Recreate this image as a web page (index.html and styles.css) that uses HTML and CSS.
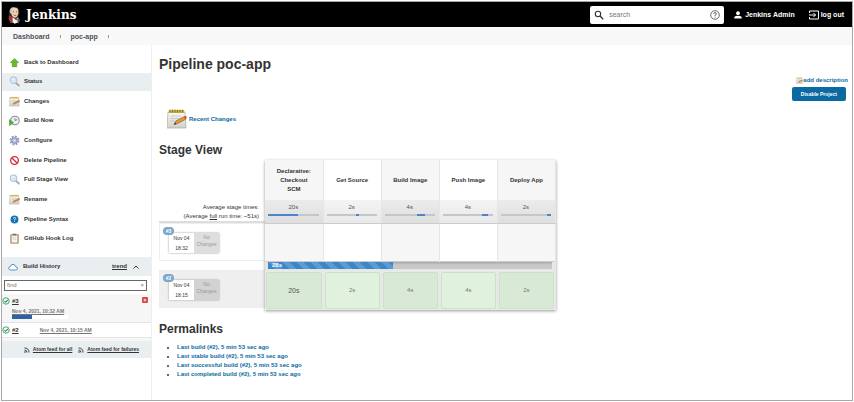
FILE: index.html
```html
<!DOCTYPE html>
<html lang="en">
<head>
<meta charset="utf-8">
<title>poc-app [Jenkins]</title>
<link rel="stylesheet" href="styles.css">
</head>
<body>
<svg class="defs" aria-hidden="true">
  <linearGradient id="paper" x1="0" y1="0" x2="0" y2="1"><stop offset="0" stop-color="#fafaf8"/><stop offset="1" stop-color="#cfcfcb"/></linearGradient>
  <symbol id="notepad" viewBox="0 0 20 20">
    <path d="M1 3h17l1 16H0z" fill="url(#paper)" stroke="#aaa9a3" stroke-width=".7"/>
    <path d="M2 1h15l.4 3H1.6z" fill="#c9b037"/>
    <path d="M3 .5v3M5.500.5v3M8 .5v3M10.500.5v3M13 .5v3M15.500.5v3" stroke="#77702f" stroke-width=".8"/>
    <path d="M3.500 7h11M3.500 9.500h9M3 12h5" stroke="#c3c3c0" stroke-width=".8"/>
    <path d="M7 15.500l2-3.500 8.500-4.500 1.500 2.500-8.500 4.500z" fill="#e59b3c" stroke="#8b5a28" stroke-width=".7"/>
    <path d="M7 15.500l1.200-2 1.200 1.400z" fill="#333"/>
    <path d="M17 7.700l1.500-.7q1.500.6 1.200 2l-1.300.9z" fill="#d94236"/>
  </symbol>
  <symbol id="note" viewBox="0 0 12 12">
    <path d="M1 2h9.500l.5 9H.5z" fill="url(#paper)" stroke="#b3b2ac" stroke-width=".6"/>
    <path d="M1 1h9.500v1.500H1z" fill="#d3b65a"/>
    <path d="M2.500 4.500h5M2.500 6h3" stroke="#c6c6c2" stroke-width=".6"/>
    <path d="M4 9l1.500-2L11 4.500l.8 1.500L6.500 8.700z" fill="#e3893a" stroke="#98602c" stroke-width=".4"/>
  </symbol>
  <symbol id="lens" viewBox="0 0 12 12">
    <path d="M7.500 7.500l3.300 3" stroke="#a2a2a0" stroke-width="1.800" stroke-linecap="round"/>
    <circle cx="5" cy="4.700" r="3.600" fill="#d6e8f8" stroke="#b0c0d0" stroke-width="1.100"/>
    <path d="M3 4.500q.5-1.800 2.300-1.800" stroke="#fff" fill="none"/>
  </symbol>
  <symbol id="check" viewBox="0 0 10 10">
    <circle cx="5" cy="5" r="4" fill="#fff" stroke="#2b9a59" stroke-width="1.100"/>
    <path d="M3 5l1.500 1.600L7.400 3.500" fill="none" stroke="#1d8348" stroke-width="1.300"/>
  </symbol>
  <symbol id="rss" viewBox="0 0 6 6">
    <path d="M.5 1Q5 1 5 5.500M.5 3q2.500 0 2.500 2.500" fill="none" stroke="#333" stroke-width=".9"/><circle cx="1" cy="5" r=".8" fill="#333"/>
  </symbol>
</svg>

<div class="frame">
  <header class="header">
    <a class="brand" href="#">
      <svg class="butler" viewBox="0 0 14 19" aria-hidden="true">
        <path d="M1 11Q0 5 3 2q4-3 8 0 2 3 1 7l-2 5H3z" fill="#2b2b2b"/>
        <path d="M3 5Q3 1.500 7 1.500T11.200 6q0 6-4 6.500Q3.500 12 3 5z" fill="#eed2b8"/>
        <path d="M2 7Q1 1.500 6.500.8 4 3 4 6L3 8z" fill="#c9c9c5"/>
        <path d="M5 6h1.500M8.500 6H10M6 9.500q1.500 1 3 0" stroke="#684637" stroke-width=".8" fill="none"/>
        <path d="M1 10l3 1 3 3-1 4H3Q0 15 1 10z" fill="#a83834"/>
        <path d="M5 12l3 2 3-2 1 5-5 2-2-2z" fill="#f3f3f3"/>
        <path d="M7.500 13.500l2.500-1 .4 3-2.500-.5z" fill="#c33b36"/>
        <path d="M11 12l2 3-2 4-1-3z" fill="#4c5c72"/>
      </svg>
      <span>Jenkins</span>
    </a>
    <label class="search">
      <svg class="i10" viewBox="0 0 10 10" aria-hidden="true"><circle cx="4" cy="4" r="2.700" fill="none" stroke="#333" stroke-width="1.100"/><path d="M6 6l3.200 3.200" stroke="#333" stroke-width="1.300"/></svg>
      <input type="text" placeholder="search" aria-label="search">
      <svg class="i10" viewBox="0 0 10 10" aria-hidden="true"><circle cx="5" cy="5" r="4.300" fill="none" stroke="#444" stroke-width=".8"/><path d="M3.600 4Q3.700 2.600 5 2.600T6.400 4Q6.400 4.600 5 5.300V6.200M5 6.900v.9" fill="none" stroke="#444" stroke-width=".8"/></svg>
    </label>
    <a class="account" href="#"><svg class="i8" viewBox="0 0 8 8" aria-hidden="true"><circle cx="4" cy="2.200" r="1.900" fill="#fff"/><path d="M.3 7.500V6.200Q1 4.800 4 4.800T7.700 6.200V7.500z" fill="#fff"/></svg>Jenkins Admin</a>
    <a class="logout" href="#"><svg class="i10" viewBox="0 0 10 10" aria-hidden="true"><path d="M.5 3V1h9v8h-9V7M0 5h6.500M4.500 3l2 2-2 2" fill="none" stroke="#fff"/></svg>log out</a>
  </header>

  <nav class="crumbs" aria-label="Breadcrumb">
    <a href="#">Dashboard</a><i></i><a href="#">poc-app</a><i></i>
  </nav>

  <div class="page">
    <aside class="side">
      <nav class="tasks">
        <a href="#"><svg viewBox="0 0 12 12"><path d="M6 1.500l4.500 4.500H8.500V10.500h-5V6H1.500z" fill="#69b92d" stroke="#459416" stroke-width=".6"/></svg>Back to Dashboard</a>
        <a href="#" class="active"><svg><use href="#lens"/></svg>Status</a>
        <a href="#"><svg><use href="#note"/></svg>Changes</a>
        <a href="#"><svg viewBox="0 0 12 12"><circle cx="6.500" cy="6" r="4.700" fill="#eef0f4" stroke="#858b98" stroke-width="1.100"/><path d="M6.500 3.500V6L9 5" fill="none" stroke="#666d85" stroke-width=".9"/><path d="M.3 5l4.700 3.300L.3 11.700z" fill="#4db82a" stroke="#32911b" stroke-width=".5"/></svg>Build Now</a>
        <a href="#"><svg viewBox="0 0 12 12"><circle cx="6" cy="6" r="4.400" fill="none" stroke="#8b93b5" stroke-width="1.900" stroke-dasharray="2 1.450"/><circle cx="6" cy="6" r="2.900" fill="#dbe0ef" stroke="#8e98c0" stroke-width="1.500"/><circle cx="6" cy="6" r="1.200" fill="#fff" stroke="#7883aa" stroke-width=".5"/></svg>Configure</a>
        <a href="#"><svg viewBox="0 0 12 12"><circle cx="6" cy="6" r="4.200" fill="#fff" stroke="#d32f37" stroke-width="1.500"/><path d="M3.200 3.200l5.600 5.600" stroke="#d32f37" stroke-width="1.500"/></svg>Delete Pipeline</a>
        <a href="#"><svg><use href="#lens"/></svg>Full Stage View</a>
        <a href="#"><svg><use href="#note"/></svg>Rename</a>
        <a href="#"><svg viewBox="0 0 12 12"><circle cx="6" cy="6" r="4.300" fill="#1673b4"/><path d="M4.700 5Q4.700 3.800 6 3.800T7.300 5Q7.300 5.600 6 6.200V6.900M6 7.400v1" fill="none" stroke="#fff" stroke-width=".9"/></svg>Pipeline Syntax</a>
        <a href="#"><svg viewBox="0 0 12 12"><path d="M1.500 1.500h9v10h-9z" fill="#a07a48"/><path d="M2.700 2.500h6.600v8H2.700z" fill="#f4f4f2"/><path d="M4 .700h4v2H4z" fill="#777"/><path d="M3.800 5h4M3.800 7h4" stroke="#c8c8c8" stroke-width=".7"/></svg>GitHub Hook Log</a>
      </nav>

      <section class="history">
        <div class="history-head">
          <svg class="i10" viewBox="0 0 10 10" aria-hidden="true"><path d="M2.600 8Q.7 8 .7 6.300T2.400 4.600Q2.800 2.400 5 2.400T7.400 4.500Q9.400 4.600 9.400 6.300T7.600 8z" fill="#fff" stroke="#3e86bf" stroke-width=".9"/></svg>
          <strong>Build History</strong>
          <a href="#">trend</a>
          <svg class="caret" viewBox="0 0 6 6" aria-hidden="true"><path d="M.5 4.500L3 2l2.500 2.500" fill="none" stroke="#333"/></svg>
        </div>
        <label class="find"><input type="text" placeholder="find" aria-label="find"><span>×</span></label>
        <div class="build running">
          <svg class="i8"><use href="#check"/></svg>
          <div class="build-info">
            <a class="num" href="#">#3</a>
            <a class="when" href="#">Nov 4, 2021, 10:32 AM</a>
            <div class="meter"><div></div></div>
          </div>
          <button class="stop" aria-label="Cancel build">×</button>
        </div>
        <div class="build">
          <svg class="i8"><use href="#check"/></svg>
          <a class="num" href="#">#2</a>
          <a class="when" href="#">Nov 4, 2021, 10:15 AM</a>
        </div>
        <div class="feeds">
          <a href="#"><svg><use href="#rss"/></svg><span>Atom feed for all</span></a>
          <a href="#"><svg><use href="#rss"/></svg><span>Atom feed for failures</span></a>
        </div>
      </section>
    </aside>

    <main class="main">
      <h1>Pipeline poc-app</h1>
      <div class="actions">
        <a href="#"><svg><use href="#note"/></svg>add description</a>
        <button>Disable Project</button>
      </div>
      <a class="recent" href="#"><svg><use href="#notepad"/></svg>Recent Changes</a>

      <h2>Stage View</h2>
      <div class="stages">
        <div class="runs">
          <div class="averages"><span>Average stage times:</span><span>(Average <u>full</u> run time: ~51s)</span></div>
          <div class="run">
            <div class="card"><span class="badge">#3</span><div class="date"><span>Nov 04</span><span>18:32</span></div><div class="none">No<br>Changes</div></div>
          </div>
          <div class="run shaded">
            <div class="card"><span class="badge">#2</span><div class="date"><span>Nov 04</span><span>18:15</span></div><div class="none">No<br>Changes</div></div>
          </div>
        </div>
        <table>
          <thead>
            <tr class="names"><th>Declarative: Checkout SCM</th><th>Get Source</th><th>Build Image</th><th>Push Image</th><th>Deploy App</th></tr>
          </thead>
          <tbody>
            <tr class="times">
              <td>20s<div class="bar"><div style="margin-left:0%;width:60%"></div></div></td>
              <td>2s<div class="bar"><div style="margin-left:59%;width:6%"></div></div></td>
              <td>4s<div class="bar"><div style="margin-left:64%;width:16%"></div></div></td>
              <td>4s<div class="bar"><div style="margin-left:79%;width:12%"></div></div></td>
              <td>2s<div class="bar"><div style="margin-left:92%;width:8%"></div></div></td>
            </tr>
            <tr class="pending"><td></td><td></td><td></td><td></td><td></td></tr>
            <tr class="progress"><td colspan="5"><div class="track"><div style="width:44%">28s</div></div></td></tr>
            <tr class="done"><td><div class="lead">20s</div></td><td><div>2s</div></td><td><div>4s</div></td><td><div>4s</div></td><td><div>2s</div></td></tr>
          </tbody>
        </table>
      </div>

      <h2 class="perma">Permalinks</h2>
      <ul class="links">
        <li><a href="#">Last build (#2), 5 min 53 sec ago</a></li>
        <li><a href="#">Last stable build (#2), 5 min 53 sec ago</a></li>
        <li><a href="#">Last successful build (#2), 5 min 53 sec ago</a></li>
        <li><a href="#">Last completed build (#2), 5 min 53 sec ago</a></li>
      </ul>
    </main>
  </div>
</div>
</body>
</html>
```
FILE: styles.css
```css
* { box-sizing: border-box; }
body { margin: 0; padding: 1px; background: #fff; color: #333; font: 6px/9px "Liberation Sans", Arial, sans-serif; }
a { color: inherit; text-decoration: none; }
button, input { font: inherit; color: inherit; border: 0; padding: 0; background: none; min-width: 0; }
input { outline: 0; }
svg { display: block; flex: none; }
.defs { position: absolute; width: 0; height: 0; }
.i8 { width: 8px; height: 8px; }
.i10 { width: 10px; height: 10px; }

.frame { display: flex; flex-direction: column; min-height: calc(100vh - 2px); border: 1px solid #a8a8a8; }

.header { display: flex; align-items: center; height: 25px; padding: 0 8px 0 6px; background: #000; color: #fff; font-size: 7px; font-weight: bold; }
.brand { display: flex; align-items: center; gap: 5px; margin-right: auto; font: bold 12px/18px "DejaVu Serif", serif; }
.butler { width: 13px; height: 18px; }
.search { display: flex; align-items: center; gap: 5px; width: 134px; height: 18px; padding: 0 4px; border-radius: 2px; background: #fff; font-weight: normal; }
.search input { flex: 1; }
.search input::placeholder { color: #777; }
.account { display: flex; align-items: center; gap: 3px; margin-left: 10px; }
.logout { display: flex; align-items: center; gap: 2px; margin-left: 14px; }

.crumbs { display: flex; align-items: center; height: 18px; padding-left: 11px; background: #f8f8f8; color: #4d545d; font-size: 7px; font-weight: bold; }
.crumbs i { width: 1px; height: 3px; margin: 0 10px; background: #999; }

.page { display: flex; flex: 1; }
.side { flex: none; width: 150px; border-right: 1px solid #eee; }
.tasks { display: flex; flex-direction: column; justify-content: space-between; height: 195px; margin-top: 8px; }
.tasks a { display: flex; align-items: center; gap: 4px; height: 18px; padding-left: 7px; font-weight: bold; }
.tasks svg { width: 11px; height: 11px; }
.tasks .active { background: #e9eef1; }

.history { margin-top: 9px; }
.history-head { display: flex; align-items: center; height: 19px; padding: 0 12px 0 6px; background: #e9eef1; font-weight: bold; }
.history-head strong { flex: 1; margin-left: 5px; }
.history-head a { text-decoration: underline; }
.caret { width: 6px; height: 6px; margin-left: 6px; }
.find { display: flex; align-items: center; height: 11px; margin: 4px 4px 3px 2px; padding: 0 2px; border: 1px solid #666; color: #777; }
.find input { flex: 1; }
.find input::placeholder { color: #777; }
.build { display: flex; align-items: center; gap: 2px; height: 15px; border-bottom: 1px solid #e4e4e4; font-size: 5px; line-height: 8px; font-weight: bold; }
.running { align-items: flex-start; height: 29px; padding-top: 3px; background: #f6f6f6; }
.build-info { display: flex; flex-direction: column; align-items: flex-start; flex: 1; }
.num { font-size: 6px; text-decoration: underline; }
.when { color: #777; text-decoration: underline; }
.running .when { margin-top: 2px; }
.build > .when { margin-left: 19px; }
.meter { width: 56px; height: 4px; background: #fff; }
.meter div { width: 35%; height: 4px; background: #2b62a8; }
.stop { width: 6px; height: 6px; margin-right: 3px; border-radius: 1px; background: #d9474b; color: #fff; line-height: 6px; }
.feeds { display: flex; align-items: center; justify-content: flex-end; gap: 6px; height: 20px; padding-right: 12px; border-top: 3px solid #f6f6f6; background: #e9eef1; font-size: 5px; font-weight: bold; }
.feeds a { display: flex; align-items: center; gap: 3px; }
.feeds svg { width: 6px; height: 6px; }
.feeds span { text-decoration: underline; }

.main { flex: 1; min-width: 0; padding: 10px 4px 10px 7px; }
h1, h2 { margin: 0; }
h1 { font-size: 14px; line-height: 18px; }
h2 { margin: 13px 0 2px; font-size: 12px; line-height: 16px; }
.actions { display: flex; flex-direction: column; align-items: flex-end; gap: 3px; margin: 3px 0 8px; line-height: 8px; font-weight: bold; }
.actions a { display: flex; align-items: center; color: #0b6aa2; }
.actions svg { width: 7px; height: 7px; }
.actions button { height: 14px; margin-right: 2px; padding: 0 9px; border-radius: 2px; background: #0b6aa2; color: #fff; font-size: 5px; }
.recent { display: flex; align-items: center; gap: 2px; padding-left: 8px; color: #0b6aa2; font-weight: bold; }
.recent svg { width: 20px; height: 20px; }

.stages { display: flex; }
.runs { width: 106px; }
.averages { display: flex; flex-direction: column; align-items: flex-end; justify-content: flex-end; height: 63px; padding: 0 6px 0 0; border-bottom: 2px solid #ddd; }
.run { height: 38px; margin-bottom: 9px; padding: 9px 0 0 9px; border: 1px solid #eee; border-right: 0; }
.shaded { margin-bottom: 0; background: #efefef; }
.card { position: relative; display: flex; width: 50px; height: 20px; font-size: 5px; line-height: 7px; text-align: center; box-shadow: 0 0 2px #999; }
.badge { position: absolute; left: -6px; top: -6px; width: 11px; height: 8px; border-radius: 4px; background: #79a6cd; color: #fff; font-weight: bold; line-height: 8px; }
.date { display: flex; flex-direction: column; justify-content: space-between; width: 25px; padding: 2px 0 1px; background: #fff; }
.none { flex: 1; padding-top: 1px; background: #dedede; color: #999; }
.shaded .none { background: #d2d2d2; }

table { width: 291px; border-collapse: collapse; table-layout: fixed; background: #fff; box-shadow: 0 1px 3px #999; }
th, td { padding: 0; border-right: 1px solid #e6e6e6; background: #fff; text-align: center; }
th:nth-child(odd), .pending td:nth-child(odd) { background: #f6f6f6; }
.names { height: 40px; }
.names th { padding: 0 10px; }
.times { height: 23px; color: #555; }
.times td { padding: 3px 4px 0 3px; border-bottom: 1px solid #ccc; background: linear-gradient(#f3f3f3, #e9e9e9); vertical-align: top; }
.times td:nth-child(odd) { background: linear-gradient(#ebebeb, #dedede); }
.bar { height: 2px; margin-top: 2px; background: #c4c6ca; }
.bar div { height: 2px; background: #4d84cf; }
.pending { height: 38px; }
.progress { height: 9px; }
.progress td { padding: 0 3px; border-top: 1px solid #ccc; background: #e6e6e6; }
.track { height: 7px; border-radius: 1px; background: linear-gradient(#a5a5a5, #c8c8c8 40%); }
.track div { height: 7px; padding-left: 4px; background: repeating-linear-gradient(45deg, #3c87c8 0 5px, #5b9bd2 5px 10px); color: #fff; font-size: 6px; font-weight: bold; line-height: 7px; text-align: left; }
.done { height: 40px; color: #777; }
.done td { padding: 1px; background: #e6ece5; }
.done td > div { height: 37px; border: 1px solid #cfdfcd; border-radius: 2px; background: #e0f2db; line-height: 35px; }
.done td:nth-child(odd) > div { background: #d8e9d5; }
.done .lead { color: #555; font-size: 7px; }

.perma { margin: 11px 0 6px; }
.links { margin: 0; padding-left: 18px; }
.links li::marker { color: #333; }
.links a { color: #0b6aa2; font-weight: bold; }
```
